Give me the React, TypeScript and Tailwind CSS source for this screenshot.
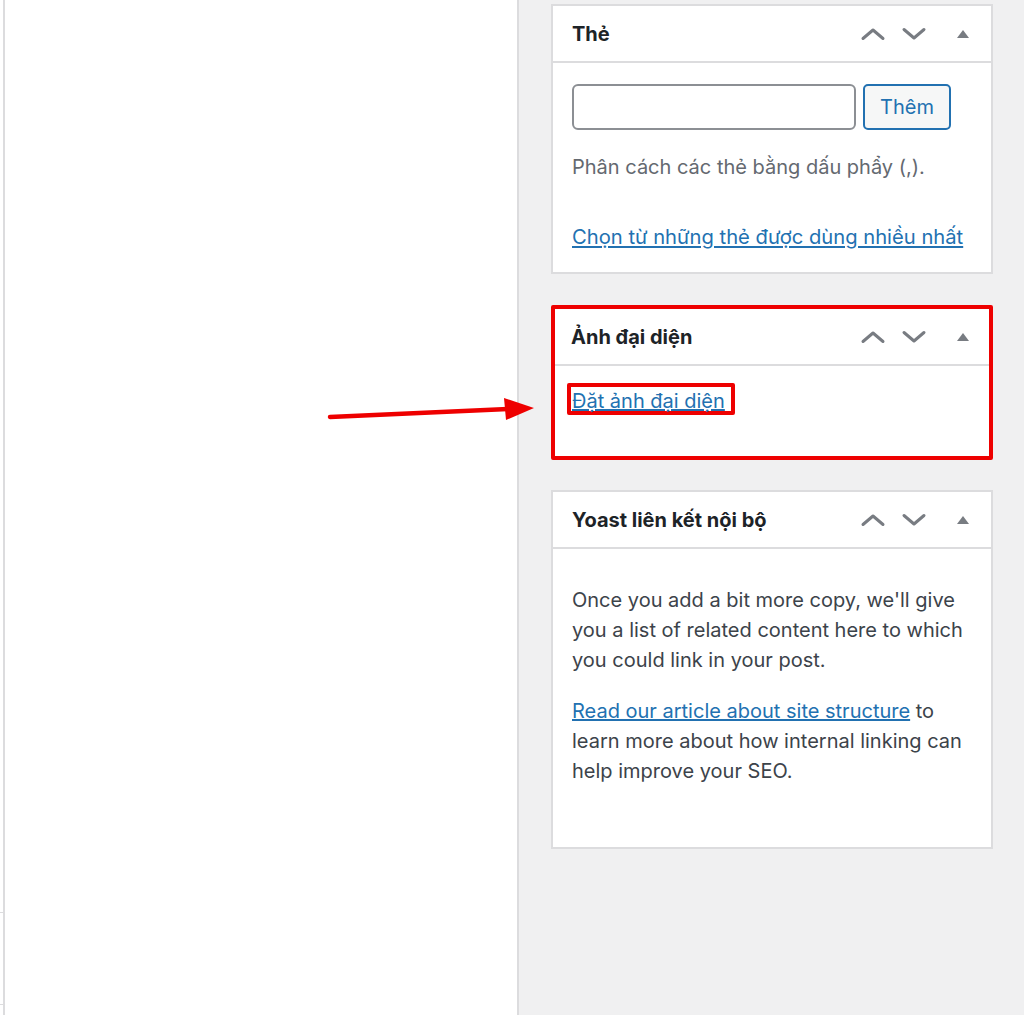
import React from 'react'

const font = { fontFamily: 'Inter, "Liberation Sans", Arial, sans-serif' }

function HeaderIcons() {
    return (
        <div className="flex items-center">
            <svg width="26" height="16" viewBox="0 0 26 16" className="mr-[15px]">
                <path d="M3 12.5 L13 4 L23 12.5" fill="none" stroke="#787c82" strokeWidth="3" strokeLinecap="round" strokeLinejoin="round" />
            </svg>
            <svg width="26" height="16" viewBox="0 0 26 16" className="mr-[29px]">
                <path d="M3 3.5 L13 12 L23 3.5" fill="none" stroke="#787c82" strokeWidth="3" strokeLinecap="round" strokeLinejoin="round" />
            </svg>
            <svg width="14" height="10" viewBox="0 0 14 10" className="mr-[21px]">
                <path d="M1 9 L7 1 L13 9 Z" fill="#787c82" />
            </svg>
        </div>
    )
}

function Header({ title }: { title: string }) {
    return (
        <div className="h-[57px] border-b-2 border-[#dcdcde] flex items-center justify-between pl-[19px]">
            <h2 className="text-[20px] font-bold text-[#1d2327]">{title}</h2>
            <HeaderIcons />
        </div>
    )
}

export default function App() {
    return (
        <div className="relative w-[1024px] h-[1015px] flex overflow-hidden" style={font}>
            {/* editor area */}
            <div className="w-[519px] h-full bg-white flex">
                <div className="w-[3px] h-full relative">
                    <div className="absolute left-0 top-[912px] w-[3px] h-[1px] bg-[#dcdcde]" />
                    <div className="absolute left-0 top-[1004px] w-[3px] h-[1px] bg-[#dcdcde]" />
                </div>
                <div className="w-[2px] h-full bg-[#dcdcde]" />
                <div className="flex-1" />
                <div className="w-[2px] h-full bg-[#dcdcde]" />
            </div>

            {/* sidebar */}
            <div className="flex-1 h-full bg-[#f0f0f1] pl-[32px] pr-[31px] pt-[4px] flex flex-col">
                {/* Thẻ */}
                <div className="bg-white border-2 border-[#dcdcde] h-[270px]">
                    <Header title="Thẻ" />
                    <div className="pl-[19px] pr-[19px] pt-[21px]">
                        <div className="flex gap-[7px]">
                            <div className="w-[284px] h-[46px] border-2 border-[#8c8f94] rounded-[6px] bg-white" />
                            <button className="w-[88px] h-[46px] border-2 border-[#2271b1] rounded-[5px] bg-[#f6f7f7] text-[#2271b1] text-[20px]">
                                Thêm
                            </button>
                        </div>
                        <p className="mt-[22px] text-[20px] leading-[30px] text-[#646970]">
                            Phân cách các thẻ bằng dấu phẩy (,).
                        </p>
                        <p className="mt-[40px] text-[20.2px] leading-[30px]">
                            <a className="text-[#2271b1] underline">Chọn từ những thẻ được dùng nhiều nhất</a>
                        </p>
                    </div>
                </div>

                {/* Ảnh đại diện */}
                <div className="mt-[31px] bg-white border-[4px] border-[#ee0000] rounded-[2px] h-[155px]">
                    <div className="h-[57px] border-b-2 border-[#dcdcde] flex items-center justify-between pl-[16px]">
                        <h2 className="text-[20px] font-bold text-[#1d2327]">Ảnh đại diện</h2>
                        <div className="-mr-[2px]"><HeaderIcons /></div>
                    </div>
                    <div className="pl-[12px] pt-[17px]">
                        <span className="inline-block border-[4px] border-[#ee0000] rounded-[2px] pl-[1px] pr-[6px] h-[32px] pt-[2px] leading-[24px] text-[20px]">
                            <a className="text-[#2271b1] underline">Đặt ảnh đại diện</a>
                        </span>
                    </div>
                </div>

                {/* Yoast */}
                <div className="mt-[30px] bg-white border-2 border-[#dcdcde] h-[359px]">
                    <Header title="Yoast liên kết nội bộ" />
                    <div className="pl-[19px] pr-[19px] pt-[36px] text-[20px] leading-[30px] text-[#3c434a]">
                        <p>Once you add a bit more copy, we'll give you a list of related content here to which you could link in your post.</p>
                        <p className="mt-[21px]">
                            <a className="text-[#2271b1] underline">Read our article about site structure</a> to learn more about how internal linking can help improve your SEO.
                        </p>
                    </div>
                </div>
            </div>

            {/* annotation arrow */}
            <svg className="absolute left-[326px] top-[396px]" width="212" height="26" viewBox="0 0 212 26">
                <path d="M4 21 L182 13" stroke="#ee0000" strokeWidth="4.5" strokeLinecap="round" />
                <path d="M178 2 L208 12 L180 24 Z" fill="#ee0000" />
            </svg>
        </div>
    )
}
